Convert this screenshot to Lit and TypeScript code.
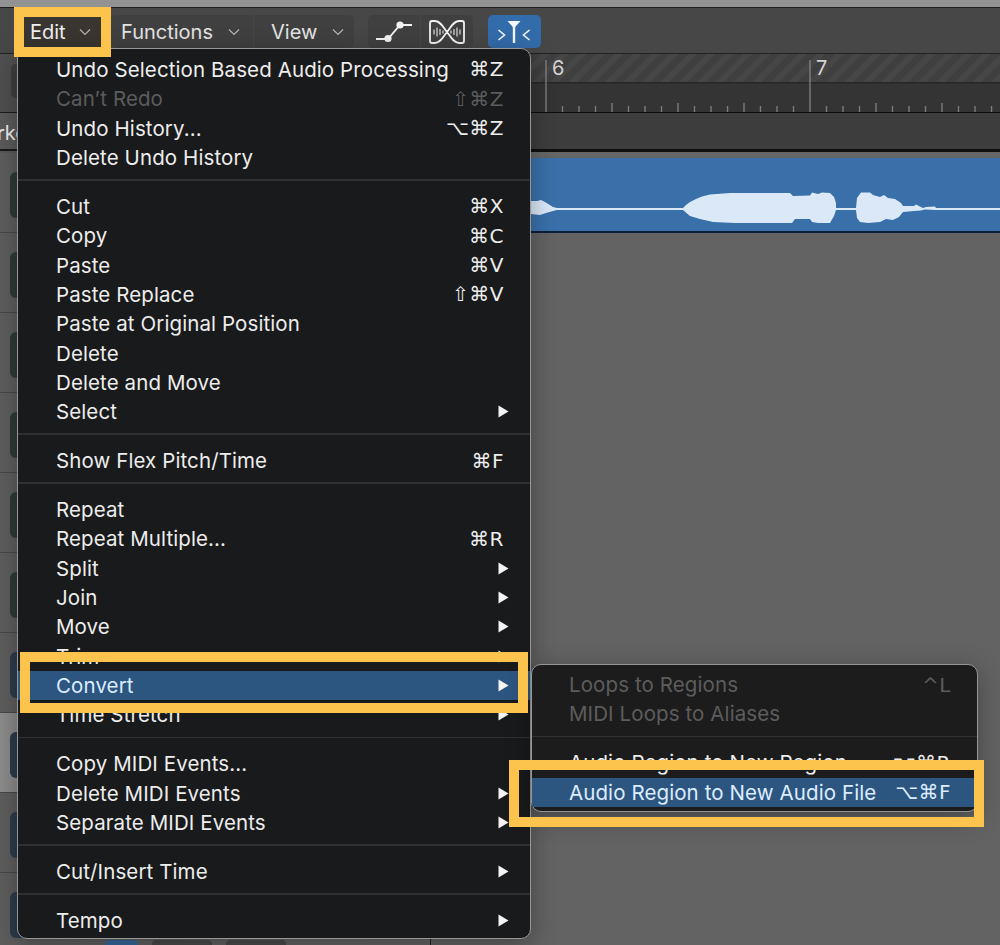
import { LitElement, html, css, svg } from "lit";
import { customElement } from "lit/decorators.js";

type Row = { t?: string; k?: string; sub?: boolean; dis?: boolean; hi?: boolean; sep?: boolean };

const MAIN: Row[] = [
  { t: "Undo Selection Based Audio Processing", k: "⌘Z" },
  { t: "Can’t Redo", k: "⇧⌘Z", dis: true },
  { t: "Undo History...", k: "⌥⌘Z" },
  { t: "Delete Undo History" },
  { sep: true },
  { t: "Cut", k: "⌘X" },
  { t: "Copy", k: "⌘C" },
  { t: "Paste", k: "⌘V" },
  { t: "Paste Replace", k: "⇧⌘V" },
  { t: "Paste at Original Position" },
  { t: "Delete" },
  { t: "Delete and Move" },
  { t: "Select", sub: true },
  { sep: true },
  { t: "Show Flex Pitch/Time", k: "⌘F" },
  { sep: true },
  { t: "Repeat" },
  { t: "Repeat Multiple...", k: "⌘R" },
  { t: "Split", sub: true },
  { t: "Join", sub: true },
  { t: "Move", sub: true },
  { t: "Trim", sub: true },
  { t: "Convert", sub: true, hi: true },
  { t: "Time Stretch", sub: true },
  { sep: true },
  { t: "Copy MIDI Events..." },
  { t: "Delete MIDI Events", sub: true },
  { t: "Separate MIDI Events", sub: true },
  { sep: true },
  { t: "Cut/Insert Time", sub: true },
  { sep: true },
  { t: "Tempo", sub: true },
];

const SUBMENU: Row[] = [
  { t: "Loops to Regions", k: "^L", dis: true },
  { t: "MIDI Loops to Aliases", dis: true },
  { sep: true },
  { t: "Audio Region to New Region", k: "⌥⌘R" },
  { t: "Audio Region to New Audio File", k: "⌥⌘F", hi: true },
];

const TRACKS = [
  { tone: "green" }, { tone: "green" }, { tone: "green" }, { tone: "green" }, { tone: "green" }, { tone: "green" },
  { tone: "blue" }, { tone: "blue", selected: true }, { tone: "blue" }, { tone: "blue", last: true },
];

const chevron = html`<svg class="chev" viewBox="0 0 12 8"><path d="M1 1.5 6 6.5 11 1.5" fill="none" stroke="currentColor" stroke-width="1.2"/></svg>`;

const WAVE =
  "M531 201 L537 201 L541 200 L545 202 L549 204.5 L553 207 L557 208 L683 208 L686 205 L690 202 L696 199 L702 196.5 L710 194.5 L730 193 L790 193 L793 196 L810 195.5 L812 192.5 L818 194 L822 192.5 L830 193 L834 197 L836 203 L836 208 L856 208 L857 198 L861 192.5 L870 192.5 L873 195 L880 197 L884 195 L888 198 L895 199 L901 203 L903 206 L914 206 L916 204.5 L919 206 L923 208 L926 207 L935 206.5 L936 208 L1000 208 L1000 210 L936 210 L925 209.5 L921 210.5 L914 211 L903 212 L899 217 L893 220 L886 219 L880 222 L868 223 L860 222 L857 218 L856 210 L836 210 L834 216 L830 223 L818 223 L812 222 L810 219 L795 219 L792 223 L735 223 L713 222 L700 219 L690 216 L683 210 L557 210 L553 211 L546 213 L540 215 L531 214 Z";

@customElement("app-root")
export class AppRoot extends LitElement {
  static styles = css`
    :host {
      display: block;
      position: relative;
      width: 1000px;
      height: 945px;
      overflow: hidden;
      background: #636363;
      font-family: Inter, "Liberation Sans", sans-serif;
      color: #ececec;
    }
    .strip { height: 7px; background: #929292; border-bottom: 1px solid #1d1d1d; }
    .toolbar {
      height: 46px;
      box-sizing: border-box;
      display: flex;
      align-items: flex-start;
      padding: 7px 0 0 14px;
      background: #474747;
      border-bottom: 1px solid #222;
    }
    .tbtn {
      height: 33px;
      display: flex;
      align-items: center;
      justify-content: space-between;
      box-sizing: border-box;
      background: #404040;
      font-size: 20px;
      color: #e4e4e4;
    }
    .tbtn.edit { width: 97px; padding: 0 20px 0 16px; background: #3a3530; color: #f0f0f0; }
    .tbtn.fn { width: 142px; padding: 0 13px 0 10px; border-radius: 5px 0 0 5px; margin-right: 1px; }
    .tbtn.view { width: 100px; padding: 0 10px 0 17px; border-radius: 0 5px 5px 0; margin-right: 14px; }
    .chev { width: 12px; height: 8px; color: #b4b4b4; }
    .icons { display: flex; width: 105px; height: 33px; margin-right: 15px; }
    .icons .a, .icons .b { background: #404040; display: block; }
    .icons .a { width: 52px; height: 33px; border-radius: 5px 0 0 5px; margin-right: 1px; }
    .icons .b { width: 52px; height: 33px; border-radius: 0 5px 5px 0; }
    .catch { width: 53px; height: 33px; background: #336cab; border-radius: 5px; display: block; }

    .main { display: flex; height: 891px; }
    .head { width: 431px; flex: none; background: #585858; border-right: 1px solid #222; box-sizing: border-box; overflow: hidden; }
    .head-top { height: 48px; background: #505050; border-bottom: 1px solid #1c1c1c; padding: 10px 0 0 11px; }
    .knob { width: 12px; height: 34px; background: #3f3f3f; border-radius: 5px; }
    .head-label {
      height: 36px;
      background: #5b5b5b;
      border-bottom: 2px solid #1a1a1a;
      font-size: 20px;
      line-height: 40px;
      margin-bottom: 2px;
      white-space: nowrap;
      text-indent: -3px;
      color: #f0f0f0;
    }
    .track {
      height: 80px;
      box-sizing: border-box;
      padding: 19px 0 0 10px;
      background: linear-gradient(90deg, #5e5e5e, #646464);
      border-bottom: 1px solid #474747;
    }
    .track.selected { background: linear-gradient(90deg, #8c8c8c, #808080); }
    .tbox { width: 16px; height: 46px; border-radius: 6px 0 0 6px; }
    .tbox.green { background: #2d3b33; }
    .tbox.blue { background: #2c3b4c; }
    .minis { display: flex; gap: 14px; margin: 2px 0 0 95px; }
    .mini { width: 33px; height: 16px; border-radius: 4px; background: #4a4a4a; }
    .mini.on { background: #36689c; }
    .mini.w { width: 60px; }

    .arr { flex: 1; min-width: 0; }
    .ruler { display: block; width: 569px; height: 59px; }
    .ruler text { font: 20px Inter, "Liberation Sans", sans-serif; fill: #d4d4d4; }
    .sub-lane { height: 36px; background: #3d3d3d; border-bottom: 3px solid #0f0f0f; }
    .gap { height: 5px; background: #666; }
    .region { height: 75px; background: #3a70aa; border-bottom: 2px solid #0e1f38; box-sizing: border-box; margin-top: 1px; }
    .region svg { display: block; width: 569px; height: 73px; }

    .menu {
      position: absolute;
      box-sizing: border-box;
      background: #191a1b;
      border: 1.5px solid #979797;
      border-radius: 10px;
      box-shadow: 0 6px 26px rgba(0, 0, 0, 0.32);
      font-size: 20.5px;
      letter-spacing: 0.1px;
      color: #ededed;
    }
    .menu.primary { left: 17px; top: 48px; width: 514px; height: 891px; padding: 5.8px 0; z-index: 2; }
    .menu.secondary { left: 531px; top: 664px; width: 447px; height: 148px; padding: 5px 0; z-index: 3; background: #1c1c1c; }
    .row {
      height: 29.33px;
      display: flex;
      align-items: center;
      justify-content: space-between;
      white-space: nowrap;
    }
    .primary .row { padding: 0 21px 0 38px; }
    .secondary .row { padding: 0 26px 0 37px; }
    .row.dis { color: #5c5c5c; }
    .row.hi { background: #2c5580; color: #dcedff; }
    .key { font-family: "DejaVu Sans", sans-serif; font-size: 20px; letter-spacing: 0.5px; margin-right: 5px; }
    .secondary .key { margin-right: 0; }
    .tri { width: 11px; height: 13px; display: block; fill: #f4f4f4; }
    .sep { height: 19.6px; display: flex; align-items: center; }
    .sep::before { content: ""; display: block; width: 100%; height: 1.5px; background: #2f3031; margin-top: -4px; }

    .mark { position: absolute; box-sizing: border-box; border: 10px solid #fcc44c; z-index: 4; pointer-events: none; }
    .mark.m1 { left: 14px; top: 7px; width: 97px; height: 50px; }
    .mark.m2 { left: 20px; top: 652px; width: 508px; height: 61px; }
    .mark.m3 { left: 509px; top: 760px; width: 475px; height: 67px; }
  `;

  private rows(list: Row[]) {
    return list.map((r) =>
      r.sep
        ? html`<div class="sep"></div>`
        : html`<div class="row ${r.dis ? "dis" : ""} ${r.hi ? "hi" : ""}">
            <span>${r.t}</span>
            ${r.k ? html`<span class="key">${r.k}</span>` : ""}
            ${r.sub ? html`<svg class="tri" viewBox="0 0 11 13"><path d="M0.5 0.5 10.5 6.5 0.5 12.5Z"/></svg>` : ""}
          </div>`
    );
  }

  private ruler() {
    const ticks = [];
    for (let bar = -2; bar < 3; bar++) {
      const x0 = 115 + bar * 264;
      for (let i = 1; i < 16; i++) {
        const x = x0 + i * 16.5;
        const tall = i % 4 === 0;
        ticks.push(svg`<line x1=${x} x2=${x} y1=${tall ? 49 : 52} y2="58" stroke="#7c7c7c" stroke-width="1.4"/>`);
      }
    }
    return html`<svg class="ruler" viewBox="0 0 569 59">
      <defs>
        <pattern id="hatch" width="13" height="13" patternUnits="userSpaceOnUse" patternTransform="rotate(45)">
          <rect width="13" height="13" fill="#3f3f3f"/>
          <rect width="6" height="13" fill="#464646"/>
        </pattern>
      </defs>
      <rect width="569" height="29" fill="url(#hatch)"/>
      <rect y="29" width="569" height="30" fill="#343434"/>
      <rect y="28" width="569" height="1.5" fill="#262626"/>
      <rect y="58" width="569" height="1" fill="#0c0c0c"/>
      ${ticks}
      <line x1="115" x2="115" y1="6" y2="58" stroke="#8a8a8a" stroke-width="1.2"/>
      <line x1="379" x2="379" y1="6" y2="58" stroke="#8a8a8a" stroke-width="1.2"/>
      <text x="121" y="21">6</text>
      <text x="385" y="21">7</text>
    </svg>`;
  }

  render() {
    return html`
      <div class="strip"></div>
      <div class="toolbar">
        <div class="tbtn edit"><span>Edit</span>${chevron}</div>
        <div class="tbtn fn"><span>Functions</span>${chevron}</div>
        <div class="tbtn view"><span>View</span>${chevron}</div>
        <div class="icons">
          <svg class="a" viewBox="368 15 52 33">
            <path d="M376 39H388L400 25H412" fill="none" stroke="#f2f2f2" stroke-width="1.8"/>
            <circle cx="388" cy="38.5" r="3.6" fill="#f2f2f2"/>
            <circle cx="400" cy="25" r="3.6" fill="#f2f2f2"/>
          </svg>
          <svg class="b" viewBox="421 15 52 33">
            <path d="M430 23.5V41C430 42.2 430.8 43 432 43H435C441 42.5 443 37 447 32C451 27 453 21.5 459 21H462C463.2 21 464 21.8 464 23V41C464 42.2 463.2 43 462 43H459C453 42.5 451 37 447 32C443 27 441 21.5 435 21H432C430.8 21 430 22 430 23.5Z" fill="none" stroke="#f2f2f2" stroke-width="1.8"/>
            <path d="M434 29.5V34.5M437 27.5V36.5M440 29V35M443 30.5V33.5M451 30.5V33.5M454 29V35M457 27.5V36.5M460 29.5V34.5" stroke="#e8e8e8" stroke-width="1.1"/>
          </svg>
        </div>
        <svg class="catch" viewBox="488 15 53 33">
          <path d="M507.5 21H520.5L515.2 27V43H512.8V27Z" fill="#f4f8ff"/>
          <path d="M498.5 30 504.5 35 498.5 40M529.5 30 523.5 35 529.5 40" fill="none" stroke="#f4f8ff" stroke-width="1.6"/>
        </svg>
      </div>
      <div class="main">
        <div class="head">
          <div class="head-top"><div class="knob"></div></div>
          <div class="head-label">rker</div>
          ${TRACKS.map(
            (t) => html`<div class="track ${t.selected ? "selected" : ""}">
              <div class="tbox ${t.tone}"></div>
              ${t.last
                ? html`<div class="minis"><div class="mini on"></div><div class="mini w"></div><div class="mini w"></div></div>`
                : ""}
            </div>`
          )}
        </div>
        <div class="arr">
          ${this.ruler()}
          <div class="sub-lane"></div>
          <div class="gap"></div>
          <div class="region">
            <svg viewBox="431 158 569 73"><path d=${WAVE} fill="#dbe8f8"/></svg>
          </div>
        </div>
      </div>
      <div class="menu primary">${this.rows(MAIN)}</div>
      <div class="menu secondary">${this.rows(SUBMENU)}</div>
      <div class="mark m1"></div>
      <div class="mark m2"></div>
      <div class="mark m3"></div>
    `;
  }
}
